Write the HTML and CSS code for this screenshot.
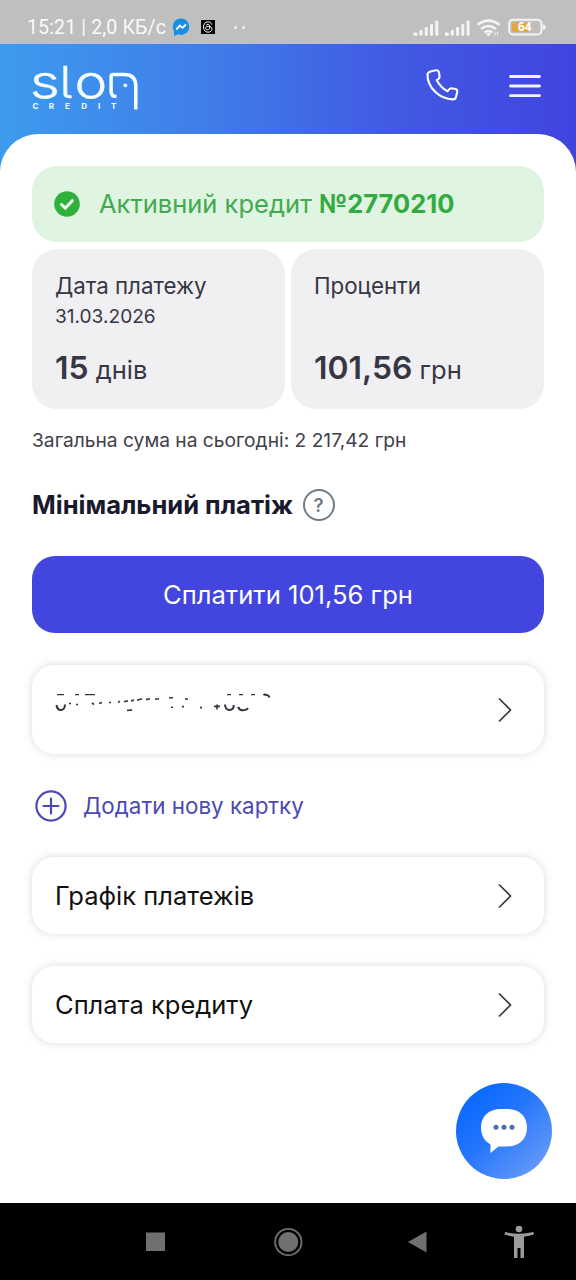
FILE: index.html
```html
<!DOCTYPE html>
<html lang="uk">
<head>
<meta charset="utf-8">
<title>Slon Credit</title>
<link rel="stylesheet" href="styles.css">
</head>
<body>
<div class="screen">
  <div class="status">
    <span class="status-time">15:21 | 2,0 КБ/с</span>
    <svg class="status-apps" width="90" height="20" viewBox="170 17 90 20">
      <circle cx="181" cy="26.7" r="8.3" fill="#168fe5"/><path d="M174 30v6l5-2z" fill="#168fe5"/>
      <path d="M176.2 29.6l3.6-4 2.7 2.3 3.5-3.4" fill="none" stroke="#fff" stroke-width="1.8"/>
      <rect x="201" y="20" width="14" height="14" fill="#000"/>
      <path d="M211.8 24.6c-.7-2-2-2.7-3.8-2.7-2.9 0-4.4 2-4.4 5.1s1.6 5.2 4.4 5.2c2.4 0 4-1.3 4-3 0-2-1.600-2.800-3.800-2.800-1.700 0-2.600.700-2.600 1.800 0 1 .8 1.600 1.900 1.600 1.500 0 2.300-1 2.300-2.900 0-1.700-.6-2.500-1.900-2.500-.8 0-1.400.3-1.800.9" fill="none" stroke="#fff" stroke-width="1"/>
      <circle cx="235.500" cy="27.500" r="1.500" fill="#f2f2f2"/><circle cx="243.500" cy="27.500" r="1.500" fill="#f2f2f2"/>
    </svg>
    <svg class="status-icons" width="134" height="20" viewBox="412 18 134 20" fill="#f4f4f4">
      <g id="signal"><rect x="413.500" y="32.500" width="4" height="3.200" rx="1"/><rect x="419.500" y="30" width="3" height="5.700" rx="1"/><rect x="424.800" y="27" width="3" height="8.700" rx="1"/><rect x="430" y="24" width="3" height="11.700" rx="1"/><rect x="435.300" y="20.500" width="3" height="15.200" rx="1"/></g>
      <use href="#signal" x="31.300"/>
      <g fill="none" stroke="#f4f4f4" stroke-width="2.600"><path d="M477.500 24.800q11-8.500 22 0M481 29q7.500-6 15 0M484.500 32.600q4-3.200 8 0"/></g>
      <circle cx="488.500" cy="34.200" r="1.800"/><path d="M494 34l1.500-2.500v5zM498 31v5l-1.500-2.500z"/>
      <rect x="509.200" y="19.700" width="32.300" height="14.800" rx="4" fill="none" stroke="#f4f4f4" stroke-width="2"/>
      <rect x="512" y="22.200" width="17.500" height="9.800" rx="1.500" fill="#e2a73f"/><path d="M543 24.500q2.500 0 2.500 2.700t-2.500 2.700z"/>
      <text class="battery" x="524.700" y="31.200" text-anchor="middle">64</text>
    </svg>
  </div>

  <header class="header">
    <svg class="logo" width="108" height="46" viewBox="31 65 108 46">
      <text class="logo-word" transform="translate(29.800 97.500) scale(1.270 1)">s</text>
      <text class="logo-word" transform="translate(59.500 97.500) scale(1.050 .96)">l</text>
      <text class="logo-word" transform="translate(74.500 97.500) scale(1.200 1)">o</text>
      <path d="M116.500 96.600c-3.600-.2-5.400-1.800-5.400-5.200V76.300c0-1.300.6-1.800 1.800-1.800h11.300c7.900 0 11.600 3.800 11.600 11.500v23.500" fill="none" stroke="#f4ffff" stroke-width="3.500"/>
      <circle cx="125.300" cy="85.300" r="1.900" fill="#f4ffff"/>
      <text class="logo-sub" y="109.400" x="32.500 48.800 65 81.300 98 111">CREDIT</text>
    </svg>
    <div class="header-actions">
      <svg width="34" height="34" viewBox="425 68 34 34" fill="none" stroke="#fff" stroke-width="2.100" stroke-linejoin="round"><path d="M431.300 71.300L436 70.300C437.500 70 438.600 70.800 439 72.200L439.600 77C439.700 78.200 439.200 78.800 436.800 80.200C439.300 85.100 443.300 88.900 447.600 91.300C449 89 449.800 88.200 451 88.300L455.500 89C457 89.300 457.500 90.400 457.200 92L456 97C455.600 98.600 454.400 99.500 452.800 99.400C439.500 99.300 427.500 87.500 427.500 74.700C427.500 72.900 429.200 71.800 431.300 71.300Z"/></svg>
      <svg width="32" height="26" viewBox="0 0 32 26" stroke="#f3f2ff" stroke-width="2.800" stroke-linecap="round"><path d="M1.500 3.500h29M1.500 13h29M1.500 22.700h29"/></svg>
    </div>
  </header>

  <main class="content">
    <section class="active-credit">
      <svg width="26" height="26" viewBox="0 0 26 26"><circle cx="13" cy="13" r="12.800" fill="#2fb13c"/><path d="M7.500 13.500l3.800 3.600 7-7.400" fill="none" stroke="#effbef" stroke-width="3" stroke-linecap="round" stroke-linejoin="round"/></svg>
      <p>Активний кредит <b>№2770210</b></p>
    </section>
    <section class="summary">
      <div class="tile">
        <span class="tile-label">Дата платежу</span>
        <span class="tile-date">31.03.2026</span>
        <span class="tile-value"><b>15</b> днів</span>
      </div>
      <div class="tile">
        <span class="tile-label">Проценти</span>
        <span class="tile-value"><b>101,56</b> грн</span>
      </div>
    </section>
    <p class="total">Загальна сума на сьогодні: 2 217,42 грн</p>
    <div class="minimum">
      <h2>Мінімальний платіж</h2>
      <span class="help">?</span>
    </div>
    <button class="pay">Сплатити 101,56 грн</button>

    <div class="row row-card">
      <svg class="masked" width="220" height="22" viewBox="54 692 220 22" fill="none" stroke="#33363d" stroke-width="1.300">
        <path d="M57 694.700h7M75 694.700h4M85 694.700h10M227 694.700h4M239 694.700h4M251 694.700h4M263 694.700h4"/>
        <path d="M56.500 705q.7 5 4.500 5t4-5.500M225 704.500q.3 5.500 4.500 5.500t4.300-5M238 707q1.500 3.300 5 3.300t5-2.300M264 694.500q4.500 0 5.500 3" stroke-width="2"/>
        <path d="M69 703.500h2m5 1h2m14-1.500l2 1.500m5-1l3-1m7 0h2M118 702.300l2-1m4 .5l4-1m3 .5l3-1.500m3 .5l5-1.500m4 .8l4-.8m5 .5l4-.5m10-1h4M171 707.300h2m9-.7h2m16 1h2m12-1.200h6m-3-2v5M185 699h3M127 710.500l5-.6" stroke-width="1.600"/>
      </svg>
      <svg class="chevron" width="14" height="26" viewBox="0 0 14 26"><path d="M1 1.500l11.500 11.500L1 24.500"/></svg>
    </div>

    <a class="add">
      <svg width="32" height="32" viewBox="0 0 32 32" fill="none" stroke="#4b49b5" stroke-width="2.200" stroke-linecap="round"><circle cx="16" cy="16" r="14.600"/><path d="M8.500 16h15M16 8.500v15"/></svg>
      <span>Додати нову картку</span>
    </a>

    <div class="row"><span>Графік платежів</span><svg class="chevron" width="14" height="26" viewBox="0 0 14 26"><path d="M1 1.500l11.500 11.500L1 24.500"/></svg></div>
    <div class="row"><span>Сплата кредиту</span><svg class="chevron" width="14" height="26" viewBox="0 0 14 26"><path d="M1 1.500l11.500 11.500L1 24.500"/></svg></div>
  </main>

  <div class="chat">
    <svg width="46" height="44" viewBox="481 1109 46 44"><path d="M501 1109h6c13 0 20 8 20 18.500S520 1146.500 507 1146.500h-8.500L490.500 1153v-8.500C484.500 1141 481 1135.500 481 1127.500 481 1117 488 1109 501 1109z" fill="#fff"/><g fill="#486fae"><circle cx="496" cy="1127.300" r="2.500"/><circle cx="504" cy="1127.300" r="2.500"/><circle cx="512" cy="1127.300" r="2.500"/></g></svg>
  </div>

  <nav class="nav">
    <svg width="576" height="77" viewBox="0 1203 576 77" fill="#707070">
      <rect x="146" y="1232.500" width="19" height="18.500"/>
      <circle cx="288.300" cy="1242" r="10"/><circle cx="288.300" cy="1242" r="13.200" fill="none" stroke="#707070" stroke-width="1.800"/>
      <path d="M408 1242l18.500-10.500v21z"/>
      <g fill="#9b9b9b"><circle cx="519" cy="1229" r="3.300"/><path d="M505 1232q14 3.300 28.500 0l.5 2.500q-4.500 1.500-10 2.200V1258h-3.500v-10h-3v10H514v-21.300q-5-.7-9.500-2.200z"/></g>
    </svg>
  </nav>
</div>
</body>
</html>
```
FILE: styles.css
```css
* { box-sizing: border-box; }
body { margin: 0; font-family: Inter, "Noto Sans", sans-serif; }
p, h2 { margin: 0; }
.screen {
  position: relative;
  display: flex;
  flex-direction: column;
  width: 576px;
  height: 1280px;
  overflow: hidden;
  background: linear-gradient(90deg, #3d9bee 0, #407be8 38%, #415ae3 68%, #4144df 100%);
}
.status {
  display: flex;
  flex: none;
  height: 44px;
  padding-left: 27px;
  background: #bfbfbf;
  border-bottom: 1px solid #b9bfdc;
}
.status-time {
  width: 143px;
  padding-top: 17px;
  font: 400 19.5px/22px Roboto, sans-serif;
  letter-spacing: .15px;
  color: #fafafa;
  white-space: nowrap;
}
.status-apps { margin-top: 17px; }
.status-icons { margin: 18px 0 0 152px; }
.battery { font: 700 11.5px "Noto Sans", sans-serif; fill: #fff; }
.header {
  display: flex;
  flex: none;
  justify-content: space-between;
  height: 90px;
  padding: 21px 36px 0 31px;
}
.logo { overflow: visible; }
.logo-word { font: 300 46px Inter, sans-serif; font-feature-settings: "cv05"; fill: #f4ffff; stroke: #f4ffff; stroke-width: .4px; }
.logo-sub { font: 700 8px Inter, sans-serif; fill: #f4ffff; }
.header-actions { display: flex; gap: 50px; padding-top: 3px; margin-right: -1px; }
.header-actions svg + svg { margin-top: 5px; }
.content {
  flex: 1;
  padding: 32px 32px 0;
  border-radius: 38px 38px 0 0;
  background: #fff;
}
.active-credit {
  display: flex;
  align-items: center;
  gap: 19px;
  height: 76px;
  padding: 0 0 1px 22px;
  border-radius: 25px;
  background: #dff4e1;
  color: #43aa50;
  font-size: 25.5px;
}
.active-credit p { margin-top: -1px; }
.active-credit svg { margin-top: 1px; }
.active-credit b { color: #32ab40; font-weight: 700; }
.summary { display: grid; grid-template-columns: 1fr 1fr; gap: 6px; margin-top: 7px; }
.tile {
  display: flex;
  flex-direction: column;
  height: 160px;
  padding: 21px 23px 18px;
  border-radius: 25px;
  background: #f0f0f3;
  color: #373744;
}
.tile-label { font-size: 22.3px; line-height: 32px; }
.tile-date { font-size: 19.1px; line-height: 28px; }
.tile-value { margin-top: auto; font-size: 25.5px; line-height: 42px; }
.tile-value b { font-size: 31.9px; font-weight: 600; }
.total { margin-top: 17px; font-size: 19.2px; line-height: 28px; color: #40404a; white-space: nowrap; }
.minimum { display: flex; align-items: center; gap: 9.5px; height: 36px; margin-top: 33px; }
.minimum h2 { margin-top: -2px; font-size: 25.5px; font-weight: 700; color: #191a2c; white-space: nowrap; }
.help {
  width: 32px;
  height: 32px;
  border: 2px solid #6f7a84;
  border-radius: 50%;
  font-size: 18.5px;
  font-weight: 600;
  line-height: 28px;
  text-align: center;
  color: #6f7a84;
}
.pay {
  display: block;
  width: 100%;
  height: 77px;
  margin-top: 33px;
  padding: 0 0 1px;
  border: 0;
  border-radius: 23px;
  background: #4246df;
  font: 400 25.6px Inter, sans-serif;
  color: #fff;
}
.row {
  display: flex;
  align-items: center;
  justify-content: space-between;
  height: 77px;
  margin-top: 32px;
  padding: 0 32px 0 23px;
  border-radius: 22px;
  background: #fff;
  box-shadow: 0 0 8px rgba(0, 0, 0, .15);
  font-size: 25.5px;
  color: #111;
}
.row-card { height: 89px; }
.masked { margin: -13px 0 0 -1px; }
.chevron { fill: none; stroke: #33333c; stroke-width: 1.6px; }
.add { display: flex; align-items: center; gap: 16px; height: 38px; margin: 33px 0 0 3px; font-size: 22.4px; color: #4b49b5; }
.add span { margin-top: -2px; }
.chat {
  position: absolute;
  left: 456px;
  top: 1083px;
  display: flex;
  align-items: center;
  justify-content: center;
  width: 96px;
  height: 96px;
  border-radius: 50%;
  background: linear-gradient(135deg, #0869ff 12%, #2475fb 45%, #6fa0f8 95%);
}
.nav { flex: none; height: 77px; background: #000; }
.nav svg { display: block; }
```
